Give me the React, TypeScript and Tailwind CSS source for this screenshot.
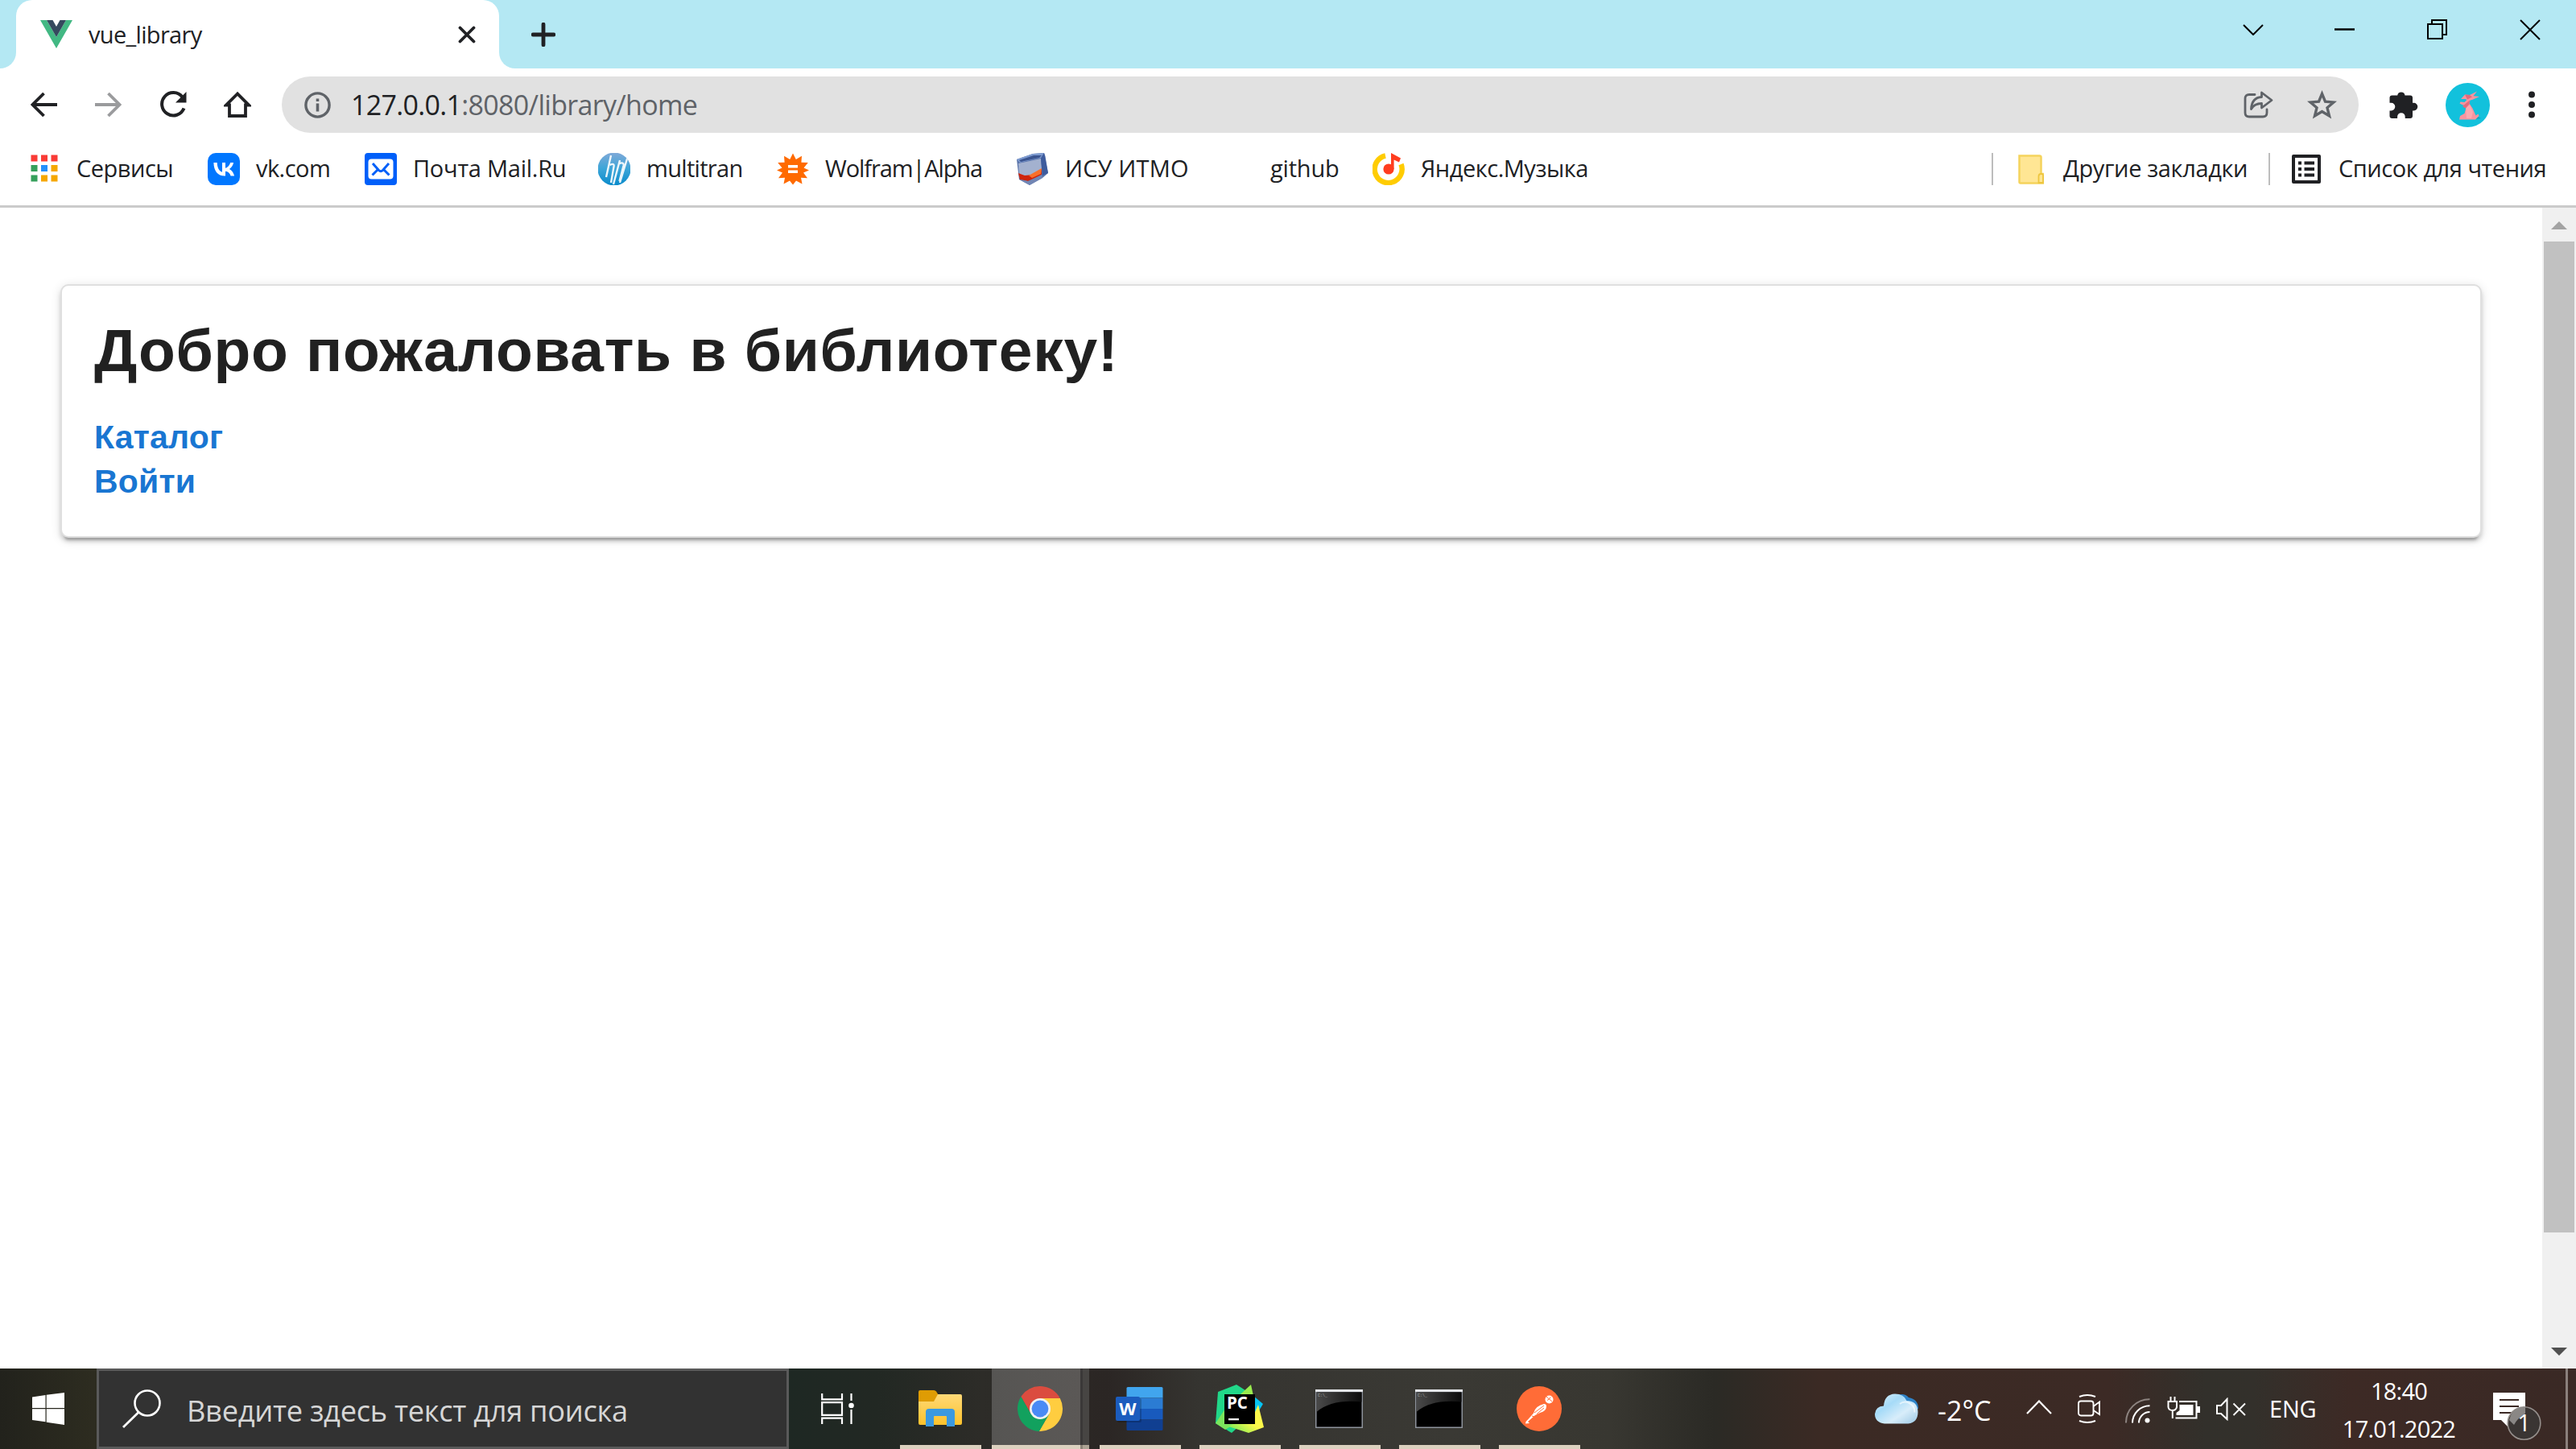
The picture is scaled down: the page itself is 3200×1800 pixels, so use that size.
import React, { type ReactNode } from "react";

/* ---------- browser icons ---------- */

const VueLogo = () => (
  <svg width="40" height="35" viewBox="0 0 40 35" className="shrink-0">
    <path d="M0 0h8l12 21L32 0h8L20 35z" fill="#42b883" />
    <path d="M8 0h7.500l4.500 8 4.500-8H32L20 21z" fill="#35495e" />
  </svg>
);

const TabClose = () => (
  <svg width="22" height="22" viewBox="0 0 22 22" className="shrink-0">
    <path d="M2.500 2.500l17 17M19.500 2.500l-17 17" stroke="#202124" strokeWidth="3.800" strokeLinecap="round" />
  </svg>
);

const Plus = () => (
  <svg width="30" height="30" viewBox="0 0 30 30">
    <path d="M15 2.200v25.600M2.200 15h25.600" stroke="#202124" strokeWidth="4.800" strokeLinecap="round" />
  </svg>
);

const Back = () => (
  <svg width="33" height="32" viewBox="0 0 33 32">
    <path d="M16.500 2L2.500 16l14 14M3 16h30" fill="none" stroke="#202124" strokeWidth="3.800" />
  </svg>
);

const Forward = () => (
  <svg width="33" height="32" viewBox="0 0 33 32">
    <path d="M16.500 2l14 14-14 14M30 16H0" fill="none" stroke="#9a9b9d" strokeWidth="3.800" />
  </svg>
);

const Reload = () => (
  <svg width="34" height="34" viewBox="0 0 34 34">
    <path d="M28.500 7.500A14.200 14.200 0 1 0 30.500 21.500" fill="none" stroke="#202124" strokeWidth="4" />
    <path d="M33.500 1v13.500H20z" fill="#202124" />
  </svg>
);

const Home = () => (
  <svg width="34" height="34" viewBox="0 0 34 34">
    <path d="M17 3.500L3 17.500h4V31h20V17.500h4z" fill="none" stroke="#202124" strokeWidth="3.800" strokeLinejoin="miter" />
  </svg>
);

const Info = () => (
  <svg width="33" height="33" viewBox="0 0 33 33">
    <circle cx="16.500" cy="16.500" r="14.600" fill="none" stroke="#5f6368" strokeWidth="3.400" />
    <path d="M14.700 8.500h3.600v3.600h-3.600zM14.700 14.500h3.600v10h-3.600z" fill="#5f6368" />
  </svg>
);

const Share = () => (
  <svg width="37" height="34" viewBox="0 0 37 34">
    <path d="M14 4.500H7q-5 0-5 5V27q0 5 5 5h17q5 0 5-5v-4" fill="none" stroke="#5f6368" strokeWidth="2.800" strokeLinecap="round" />
    <path d="M22.500 2L35 11.500 22.500 21v-5.500C15.500 15.500 12 18 9.500 22.500 10 13 14.500 8 22.500 7.500z" fill="none" stroke="#5f6368" strokeWidth="2.800" strokeLinejoin="round" />
  </svg>
);

const Star = () => (
  <svg width="37" height="36" viewBox="0 0 37 36">
    <path d="M18.500 4.500l4 9.600 10.500.9-8 6.800 2.500 10.200-9-5.500-9 5.500L12 21.800 4 15l10.500-.9z" fill="none" stroke="#5f6368" strokeWidth="3.400" />
  </svg>
);

const Puzzle = () => (
  <svg width="36" height="36" viewBox="0 0 36 36">
    <path d="M10.200 6.500a4.700 4.700 0 0 1 9.300 0H26a3 3 0 0 1 3 3v6.300h1.500a4.800 4.800 0 0 1 0 9.600H29V32a3 3 0 0 1-3 3h-6.300v-2a4.800 4.800 0 0 0-9.600 0v2H3.500a3 3 0 0 1-3-3v-6.600H2.500a4.800 4.800 0 0 0 0-9.600H.5V9.500a3 3 0 0 1 3-3z" fill="#202124" />
  </svg>
);

const Avatar = () => (
  <svg width="55" height="55" viewBox="0 0 55 55">
    <circle cx="27.500" cy="27.500" r="27.500" fill="#12c1dc" />
    <path d="M17 44l20 1 7-1-4-2z" fill="#0ba3bf" />
    <path d="M19 20l5-5.500 6 .5 9-4.500-4.500 5.800 7.500.700-9 4-2.500.500-1 4 4 6 4 9 3-2 1 2.500-4.500 4.500H17l1-4.500 5.500-3 2-7-1-3-3-.5-4-2 1-2 5 .5 3-3-2-1z" fill="#f8949f" />
    <path d="M24 14.500l6 .5 3 2.500-6 3zM21 29l9-7.500-.5 5-5 5z" fill="#e36a7c" />
    <path d="M25 32l5-5 4 9-2 8h-6z" fill="#fba9b0" />
  </svg>
);

const Dots = () => (
  <svg width="10" height="34" viewBox="0 0 10 34">
    <circle cx="5" cy="4.500" r="4" fill="#202124" />
    <circle cx="5" cy="17" r="4" fill="#202124" />
    <circle cx="5" cy="29.500" r="4" fill="#202124" />
  </svg>
);

/* ---------- bookmark icons ---------- */

const appColors = ["#f93b36", "#f93b36", "#f93b36", "#35a05b", "#2490fb", "#f5a700", "#35a05b", "#f5a700", "#f5a700"];

const Apps = () => (
  <svg width="40" height="40" viewBox="0 0 40 40">
    {appColors.map((c, i) => (
      <rect key={i} x={3.5 + (i % 3) * 12.5} y={2.5 + Math.floor(i / 3) * 12.5} width="8" height="8" fill={c} />
    ))}
  </svg>
);

const Vk = () => (
  <svg width="40" height="40" viewBox="0 0 40 40">
    <rect width="40" height="40" rx="10" fill="#0077ff" />
    <path d="M21 28.500C12.500 28.500 7.600 22.500 7.400 12h4.300c.2 7.700 3.600 11 6.300 11.700V12h4v6.700c2.600-.3 5.200-3.300 6.100-6.700h4c-.6 3.700-3.300 6.700-5.200 7.900 1.900 1 5 3.400 6.200 8.600h-4.500c-.9-3-3.300-5.400-6.600-5.700v5.700z" fill="#fff" />
  </svg>
);

const Mail = () => (
  <svg width="40" height="40" viewBox="0 0 40 40">
    <rect width="40" height="40" rx="4" fill="#005ff9" />
    <rect x="4.500" y="7.500" width="31" height="25" rx="4" fill="#fff" />
    <path d="M10 13l7.500 8.500q2.500 2.500 5 0L30 13M9.500 27.500l6.500-6.500M30.500 27.500L24 21" fill="none" stroke="#005ff9" strokeWidth="3" />
  </svg>
);

const Multitran = () => (
  <svg width="40" height="40" viewBox="0 0 40 40">
    <defs>
      <linearGradient id="mt" x1="0" y1="0" x2="0" y2="1">
        <stop offset="0" stopColor="#7fa9d8" />
        <stop offset=".5" stopColor="#3ba5d8" />
        <stop offset="1" stopColor="#0a8bcb" />
      </linearGradient>
      <clipPath id="mtc"><circle cx="20" cy="20" r="20.500" /></clipPath>
    </defs>
    <g clipPath="url(#mtc)">
      <rect width="40" height="40" fill="url(#mt)" />
      <path d="M16 3L10 30M14.500 15q6-3 5 2L16 37M27 9l-8 30M26.500 13q6-2 5 3l-5 19M37 4l-10 33" fill="none" stroke="#fff" strokeWidth="2.400" opacity=".9" />
    </g>
  </svg>
);

const Wolfram = () => (
  <svg width="40" height="40" viewBox="0 0 40 40">
    <path d="M20 .5l3.800 7.500L31 3.800l-.6 8 8.400.2-5.300 6.500L40 21.500l-7 3 5 6.800-8-.6 1.500 7.800-7.500-4L20 39.500l-4-5-7.500 4L10 30.700l-8 .6 5-6.800-7-3 6.500-3-5.300-6.500 8.400-.2-.6-8L16.200 8z" fill="#ff6a00" />
    <path d="M14 15h12v3.600H14zM14 21.500h12v3.600H14z" fill="#fff" />
  </svg>
);

const Isu = () => (
  <svg width="40" height="40" viewBox="0 0 40 40">
    <path d="M0 8L20 1l14-1 1.500 4L39 25l-7 6-16 9L3 33z" fill="#5a74aa" />
    <path d="M0 8L20 1l14-1-4 6-26 6z" fill="#7e9bd0" />
    <path d="M3 9l18-6 10 0-3 3-23 5z" fill="#3b5590" />
    <path d="M2 13l28-6 1 15-16 9L3 26z" fill="#a3b1cf" />
    <path d="M30 7l4-7 5 25-7 3z" fill="#3e5c9d" />
    <path d="M2 25l8 3 10-1 11-7v7l-9 5-8 3-10-2z" fill="#cf240c" />
    <path d="M15 28l16-9-1 7-11 5z" fill="#f9702a" />
    <path d="M4 33l10 2 17-8 1 4-16 9z" fill="#7286b4" />
  </svg>
);

const Music = () => (
  <svg width="40" height="40" viewBox="0 0 40 40">
    <path d="M16 3.500A17 17 0 1 0 35.500 14" fill="none" stroke="#ffcc00" strokeWidth="6.500" />
    <circle cx="20" cy="20" r="6.600" fill="#ff3d1f" />
    <path d="M23 0l12 6.500-2 5-6.400-3V20H23z" fill="#ff3d1f" />
  </svg>
);

const Folder = () => (
  <svg width="32" height="37" viewBox="0 0 32 37">
    <path d="M1.500 1.500h25q2 0 2 2V24h2.500v11.500H3q-1.500 0-1.500-1.500z" fill="#ffe694" stroke="#f5d35c" strokeWidth="2.500" />
    <path d="M25.500 35V27q0-3 3-3t2.500 3v8z" fill="#ffe694" stroke="#eec63f" strokeWidth="1.800" />
  </svg>
);

const ReadingList = () => (
  <svg width="36" height="36" viewBox="0 0 36 36">
    <rect x="2" y="2" width="32" height="32" fill="none" stroke="#202124" strokeWidth="4" strokeLinejoin="round" />
    <path d="M8 8.500h4v4H8zM8 16h4v4H8zM8 23.500h4v4H8zM15.500 8.500H28v4H15.500zM15.500 16H28v4H15.500zM15.500 23.500H28v4H15.500z" fill="#202124" />
  </svg>
);

/* ---------- taskbar icons ---------- */

const WinLogo = () => (
  <svg width="40" height="40" viewBox="0 0 40 40">
    <path d="M0 5.500L16.500 3v16H0zM17.700 2.800L40 0v19H17.700zM0 20.300h16.500v16L0 34zM17.700 20.300H40V40l-22.300-3.300z" fill="#fff" />
  </svg>
);

const Magnifier = () => (
  <svg width="48" height="48" viewBox="0 0 48 48" className="shrink-0">
    <circle cx="31" cy="17" r="15.500" fill="none" stroke="#fff" strokeWidth="2.600" />
    <path d="M20 28.500L1 47" stroke="#fff" strokeWidth="2.800" />
  </svg>
);

const TaskView = () => (
  <svg width="42" height="40" viewBox="0 0 42 40">
    <path d="M1.200 1v7.300H26V1M1.200 39v-7.300H26V39M1.200 12.200H26v15.600H1.200zM37.500 1v9M37.500 21v18" fill="none" stroke="#fff" strokeWidth="2.200" />
    <circle cx="37.500" cy="16" r="3.300" fill="#fff" />
  </svg>
);

const Explorer = () => (
  <svg width="54" height="46" viewBox="0 0 54 46">
    <defs>
      <linearGradient id="ex" x1="0" y1="0" x2="0" y2="1">
        <stop offset="0" stopColor="#ffd977" />
        <stop offset="1" stopColor="#fcc22c" />
      </linearGradient>
    </defs>
    <path d="M2 0h17q2 0 3 1.500l4 6.500-4 6H0V2q0-2 2-2z" fill="#df9c04" />
    <path d="M0 14h19l5-9h28q2 0 2 2v34q0 2-2 2H2q-2 0-2-2z" fill="url(#ex)" />
    <path d="M9 45V27q0-4 4-4h28q4 0 4 4v18H35V33q0-1-1-1H20q-1 0-1 1v12z" fill="#3a99e0" />
  </svg>
);

const Chrome = () => (
  <svg width="56" height="56" viewBox="0 0 56 56">
    <path d="M4.340 13.020A28 28 0 0 1 52.800 15H28L16.740 34.500z" fill="#db4c3f" />
    <path d="M52.800 15A28 28 0 0 1 26.860 55.980L39.260 34.500 28 15z" fill="#ffcd40" />
    <path d="M26.860 55.980A28 28 0 0 1 4.340 13.020L16.740 34.500h22.520z" fill="#12a15e" />
    <circle cx="28" cy="28" r="13" fill="#f1f1f1" />
    <circle cx="28" cy="28" r="10.400" fill="#4a8af5" />
  </svg>
);

const Word = () => (
  <svg width="59" height="54" viewBox="0 0 59 54">
    <path d="M15 0h42q1.500 0 1.500 1.500V13.500h-45V1.500Q13.500 0 15 0z" fill="#41a5ee" />
    <path d="M13.500 13.500h45V27h-45z" fill="#2b7cd3" />
    <path d="M13.500 27h45v13.500h-45z" fill="#185abd" />
    <path d="M13.500 40.500h45v12q0 1.500-1.500 1.500H15q-1.500 0-1.500-1.500z" fill="#103f91" />
    <rect x="2" y="14" width="30" height="30" rx="2" fill="#000" opacity=".2" />
    <rect y="12" width="30" height="30" rx="2" fill="#1b5cbe" />
    <text x="15" y="34.500" textAnchor="middle" fill="#fff" className="font-['Open_Sans'] text-[22px] font-bold">W</text>
  </svg>
);

const PyCharm = () => (
  <svg width="60" height="60" viewBox="0 0 60 60">
    <defs>
      <linearGradient id="py" x1="0" y1="1" x2="1" y2="0">
        <stop offset="0" stopColor="#5fe85a" />
        <stop offset=".5" stopColor="#fcf84a" />
      </linearGradient>
    </defs>
    <path d="M3 9L26 0l14 9-8 40-12 11L0 48z" fill="#21d789" />
    <path d="M0 48l12-18 10 20-10 6z" fill="#7be55c" />
    <path d="M31 12L44 0l3 14z" fill="#9aec4e" />
    <path d="M47 14l12 10-6 10-6 2z" fill="#07c3f2" />
    <path d="M16 52l33-18 4-9 7 28-19 7z" fill="url(#py)" />
    <rect x="11" y="12" width="38" height="37" fill="#000" />
    <text x="14" y="30" fill="#fff" className="font-['Open_Sans'] text-[20.500px] font-bold">PC</text>
    <path d="M16 42h13v2.300H16z" fill="#fff" />
  </svg>
);

const Terminal = ({ id }: { id: string }) => (
  <svg width="59" height="48" viewBox="0 0 59 48">
    <defs>
      <linearGradient id={id} x1="0" y1="0" x2="1" y2="0">
        <stop offset="0" stopColor="#4a4a4a" />
        <stop offset="1" stopColor="#0c0c0c" />
      </linearGradient>
    </defs>
    <rect width="59" height="48" fill="#8e939c" />
    <rect width="59" height="3" fill="#e4e6ea" />
    <rect x="1.500" y="3.500" width="56" height="43" fill="#000" />
    <path d="M1.500 3.500h56v12Q20 12 1.500 28z" fill={`url(#${id})`} />
    <text x="3" y="9" fill="#aaa" className="font-['Liberation_Mono'] text-[5px]">C:\_</text>
  </svg>
);

const Postman = () => (
  <svg width="56" height="56" viewBox="0 0 56 56">
    <circle cx="28" cy="28" r="28" fill="#ff6c37" />
    <circle cx="40.500" cy="16.500" r="5" fill="#fff" />
    <path d="M37 13l7 6M38 17.500q3-1 4-4" stroke="#ff6c37" strokeWidth="1" fill="none" />
    <path d="M34 22q3 0 3 3 0 6-8 8l-6 3-9 8 2 2-5 .5q0-3 3-5l7-8q2-9 13-11.500z" fill="#fff" />
    <path d="M22 33l12-9M25 34.500l9-7.500M19 37l3 1" stroke="#ff6c37" strokeWidth="1" />
  </svg>
);

const Cloud = () => (
  <svg width="54" height="38" viewBox="0 0 54 38">
    <defs>
      <linearGradient id="cl" x1="0" y1="0" x2="1" y2="1">
        <stop offset="0" stopColor="#dff1fb" />
        <stop offset=".35" stopColor="#a6dbf8" />
        <stop offset=".65" stopColor="#d8edfa" />
        <stop offset="1" stopColor="#9cc8e4" />
      </linearGradient>
    </defs>
    <path d="M28 2q9-3 14 3 12 2 12 14L40 24z" fill="#2f83c7" />
    <path d="M12 37.500Q0 36 0 25.500 1 16 11 15.500 12 1 25 .5q11 0 14.500 8.500Q53 9 53.500 23q0 13-12 14.500z" fill="url(#cl)" />
    <path d="M31 13q5-4 11-1.500 8 4 7.500 12" fill="none" stroke="#fff" strokeWidth="2" opacity=".6" />
  </svg>
);

const ChevronUp = () => (
  <svg width="32" height="18" viewBox="0 0 32 18">
    <path d="M1 17L16 1.500 31 17" fill="none" stroke="#fff" strokeWidth="2.200" />
  </svg>
);

const MeetNow = () => (
  <svg width="29" height="36" viewBox="0 0 29 36">
    <path d="M2 3Q12-1 22 3M2 33q10 4 20 0M19.500 15l7.500-5.500V25l-7.500-5" fill="none" stroke="#fff" strokeWidth="1.900" />
    <rect x="1" y="8.500" width="18.500" height="18" rx="3" fill="none" stroke="#fff" strokeWidth="1.900" />
  </svg>
);

const Wifi = () => (
  <svg width="31" height="31" viewBox="0 0 31 31">
    <path d="M1 30.500A29 29 0 0 1 30.500 1.200" fill="none" stroke="#8d8480" strokeWidth="2" />
    <path d="M9 30.500A21.500 21.500 0 0 1 30.500 9.200M17 30.500A13.500 13.500 0 0 1 30.500 17" fill="none" stroke="#fff" strokeWidth="2" />
    <circle cx="27.500" cy="27.500" r="3" fill="#fff" />
  </svg>
);

const Battery = () => (
  <svg width="41" height="28" viewBox="0 0 41 28">
    <path d="M15 6h21.500v20.500H10.500" fill="none" stroke="#fff" strokeWidth="2" />
    <path d="M15.500 10h17v13H11.500v-3l4-3zM37 12h4v8h-4z" fill="#fff" />
    <path d="M4.500 0v6M9.500 0v6M1.500 6h10.500v7q-1 4-5 4-5 0-5.500-4zM6.800 17v10" fill="none" stroke="#fff" strokeWidth="2" />
  </svg>
);

const Muted = () => (
  <svg width="37" height="29" viewBox="0 0 37 29">
    <path d="M1 10h5l7.500-8v25l-7.500-7H1z" fill="none" stroke="#fff" strokeWidth="2" />
    <path d="M21.500 7.500L36 22M36 7.500L21.500 22" stroke="#fff" strokeWidth="1.900" />
  </svg>
);

const Notification = () => (
  <svg width="60" height="60" viewBox="0 0 60 60">
    <path d="M0 0h40v34H26l-8 8-8-8H0z" fill="#fff" />
    <path d="M8 9h24M8 17h24M8 25h16" stroke="#3c2a25" strokeWidth="2" />
    <circle cx="38.500" cy="38" r="20.300" fill="#3a3533" stroke="#958f8c" strokeWidth="1.600" />
    <path d="M20 34q3-13 14-16l6 0v8q-10 6-14 14z" fill="#8a8785" />
    <text x="38.500" y="48" textAnchor="middle" fill="#fff" className="font-['Open_Sans'] text-[29px]">1</text>
  </svg>
);

/* ---------- pieces ---------- */

function Bookmark({ icon, label, box, track }: { icon?: ReactNode; label: string; box: string; track: string }) {
  return (
    <div className={`flex h-10 shrink-0 items-center ${box}`}>
      <span className="flex w-10 shrink-0 justify-center">{icon}</span>
      <span className={`relative -top-px ml-5 whitespace-nowrap ${track}`}>{label}</span>
    </div>
  );
}

function Task({ children }: { children: ReactNode }) {
  return (
    <div className="mr-[23px] flex h-full w-[101px] shrink-0 items-center justify-center border-b-[5px] border-[#dcd1bf] pr-[2px] pt-[5px]">
      {children}
    </div>
  );
}

function TabStrip() {
  return (
    <div className="flex h-[85px] bg-[#b4e8f3]">
      <div className="w-5 bg-white"><div className="h-full rounded-br-[20px] bg-[#b4e8f3]" /></div>
      <div className="flex w-[600px] items-center rounded-t-[20px] bg-white pl-[30px] pr-[29px]">
        <VueLogo />
        <span className="ml-5 flex-1 text-[29px] tracking-[-0.68px]">vue_library</span>
        <TabClose />
      </div>
      <div className="w-5 bg-white"><div className="h-full rounded-bl-[20px] bg-[#b4e8f3]" /></div>
      <div className="ml-5 flex items-center"><Plus /></div>
      <div className="ml-auto flex h-[73px] items-center pr-[44px]">
        <svg width="26" height="14" viewBox="0 0 26 14" className="mr-[88px]"><path d="M1 1l12 12L25 1" fill="none" stroke="#000" strokeWidth="2" /></svg>
        <svg width="25" height="3" viewBox="0 0 25 3" className="mr-[90px]"><path d="M0 1.500h25" stroke="#000" strokeWidth="2.500" /></svg>
        <svg width="25" height="25" viewBox="0 0 25 25" className="mr-[90px]"><path d="M1 6h18v18H1zM6 6V1h18v18h-5" fill="none" stroke="#000" strokeWidth="2" /></svg>
        <svg width="26" height="26" viewBox="0 0 26 26"><path d="M1 1l24 24M25 1L1 25" stroke="#000" strokeWidth="2" /></svg>
      </div>
    </div>
  );
}

function Toolbar() {
  return (
    <div className="flex h-[90px] items-center pl-[38px]">
      <div className="mr-[47px]"><Back /></div>
      <div className="mr-[47px]"><Forward /></div>
      <div className="mr-[46px]"><Reload /></div>
      <div className="mr-[38px]"><Home /></div>
      <div className="flex h-[70px] w-[2580px] items-center rounded-full bg-[#e1e1e1] pl-[28px] pr-[27px]">
        <Info />
        <span className="ml-[25px] flex-1 text-[34px] tracking-[-0.68px] text-[#5f6368]">
          <span className="text-[#202124]">127.0.0.1</span>:8080/library/home
        </span>
        <div className="mr-[42px]"><Share /></div>
        <Star />
      </div>
      <div className="ml-[38px]"><Puzzle /></div>
      <div className="ml-[34px]"><Avatar /></div>
      <div className="ml-[47px]"><Dots /></div>
    </div>
  );
}

function Bookmarks() {
  return (
    <div className="flex h-[83px] items-center border-b-[3px] border-[#cbcbcb] pb-[10px] pl-[35px] text-[29px]">
      <Bookmark icon={<Apps />} label="Сервисы" box="w-[223px]" track="tracking-[-0.5px]" />
      <Bookmark icon={<Vk />} label="vk.com" box="w-[195px]" track="tracking-[-0.55px]" />
      <Bookmark icon={<Mail />} label="Почта Mail.Ru" box="w-[290px]" track="tracking-[-0.25px]" />
      <Bookmark icon={<Multitran />} label="multitran" box="w-[222px]" track="tracking-[-0.68px]" />
      <Bookmark icon={<Wolfram />} label="Wolfram|Alpha" box="w-[298px]" track="tracking-[-1.1px]" />
      <Bookmark icon={<Isu />} label="ИСУ ИТМО" box="w-[255px]" track="tracking-[0.15px]" />
      <Bookmark label="github" box="w-[187px]" track="tracking-[-0.2px]" />
      <Bookmark icon={<Music />} label="Яндекс.Музыка" box="w-[300px]" track="tracking-[-0.48px]" />
      <div className="ml-auto flex h-10 items-center">
        <div className="h-10 w-[2px] bg-[#bdbdbd]" />
        <div className="ml-[31px] mr-[24px]"><Folder /></div>
        <span className="relative -top-px w-[255px] whitespace-nowrap tracking-[-0.38px]">Другие закладки</span>
        <div className="h-10 w-[2px] bg-[#bdbdbd]" />
        <div className="ml-[27px] mr-[22px]"><ReadingList /></div>
        <span className="relative -top-px w-[295px] whitespace-nowrap tracking-[-0.45px]">Список для чтения</span>
      </div>
    </div>
  );
}

function Page() {
  return (
    <div className="flex h-[1442px] bg-white">
      <main className="flex-1 pl-[75px] pr-[75px] pt-[95px]">
        <div className="h-[315px] rounded-[10px] border-2 border-[#dfdfdf] bg-white pl-10 pt-[40px] font-['Liberation_Sans',sans-serif] font-bold shadow-[0_7.5px_2.5px_-5px_rgba(0,0,0,0.2),0_5px_5px_0_rgba(0,0,0,0.14),0_2.5px_12.5px_0_rgba(0,0,0,0.12)]">
          <h1 className="text-[75px] leading-[80px] tracking-[0.68px] text-[#212121]">Добро пожаловать в библиотеку!</h1>
          <nav className="mt-[41px] flex flex-col items-start text-[41px] leading-[55px] tracking-[0.2px] text-[#1976d2]">
            <a>Каталог</a>
            <a>Войти</a>
          </nav>
        </div>
      </main>
      <div className="flex w-[42px] flex-col items-center bg-[#f0f0f0]">
        <svg width="20" height="10" viewBox="0 0 20 10" className="mt-[17px]"><path d="M10 0l10 10H0z" fill="#a3a3a3" /></svg>
        <div className="mt-[15px] h-[1231px] w-[38px] bg-[#c1c1c1]" />
        <svg width="20" height="10" viewBox="0 0 20 10" className="mb-4 mt-auto"><path d="M10 10L0 0h20z" fill="#505050" /></svg>
      </div>
    </div>
  );
}

function Taskbar() {
  return (
    <div className="flex h-[100px] items-center bg-[linear-gradient(90deg,#22221c_0px,#2d2c20_115px,#1e2823_980px,#222823_1090px,#2d2c28_1220px,#2b2624_1375px,#353430_1490px,#3a3934_1800px,#383731_2000px,#2b2a25_2130px,#3b2a24_2260px,#3c2a25_2620px,#32302b_2740px,#33302b_2800px,#3d2a25_2920px,#3a2925_3200px)] text-white">
      <div className="flex w-[120px] justify-center"><WinLogo /></div>
      <div className="flex h-full w-[860px] items-center border-[3px] border-[#5a5a5a] bg-[#323232] pl-[29px]">
        <Magnifier />
        <span className="relative top-[2px] ml-[32px] whitespace-nowrap text-[36.25px] tracking-[-0.3px] text-[#d6d6d6]">Введите здесь текст для поиска</span>
      </div>
      <div className="ml-[40px] mr-[56px]"><TaskView /></div>
      <div className="-mr-[10px] h-full"><Task><Explorer /></Task></div>
      <div className="mr-[13px] flex h-full w-[121px] flex-col">
        <div className="flex h-[95px] items-center justify-center bg-[linear-gradient(90deg,#565553_0px,#5b5856_110px,#3a3838_110px,#3a3838_113px,#474543_113px)] pr-[2px] pt-[5px]"><Chrome /></div>
        <div className="h-[5px] bg-[linear-gradient(90deg,#dcd1bf_110px,#8c8478_110px,#8c8478_113px,#ada394_113px)]" />
      </div>
      <Task><Word /></Task>
      <Task><PyCharm /></Task>
      <Task><Terminal id="t1" /></Task>
      <Task><Terminal id="t2" /></Task>
      <Task><Postman /></Task>
      <div className="ml-auto flex h-full items-center">
        <Cloud />
        <span className="relative top-[2px] ml-[24px] w-[110px] whitespace-nowrap text-[34px]">-2°C</span>
        <div className="relative -top-[2px] mr-[32px]"><ChevronUp /></div>
        <div className="mr-[30px]"><MeetNow /></div>
        <div className="relative top-[2px] mr-[21px]"><Wifi /></div>
        <div className="relative -top-px mr-[20px]"><Battery /></div>
        <div className="mr-[29px]"><Muted /></div>
        <span className="w-[90px] text-[29px] tracking-[-0.2px]">ENG</span>
        <div className="relative top-px mr-[46px] flex w-[142px] flex-col items-center whitespace-nowrap text-[29px] leading-[47px] tracking-[-0.75px]">
          <span>18:40</span>
          <span>17.01.2022</span>
        </div>
        <div className="relative top-[10px] mr-[30px]"><Notification /></div>
        <div className="mr-[10px] h-full w-[3px] bg-[#8b807c]" />
      </div>
    </div>
  );
}

export default function App() {
  return (
    <div className="flex h-[1800px] w-[3200px] flex-col overflow-hidden bg-white font-['Open_Sans','Noto_Sans',sans-serif] text-[#202124]">
      <TabStrip />
      <Toolbar />
      <Bookmarks />
      <Page />
      <Taskbar />
    </div>
  );
}
